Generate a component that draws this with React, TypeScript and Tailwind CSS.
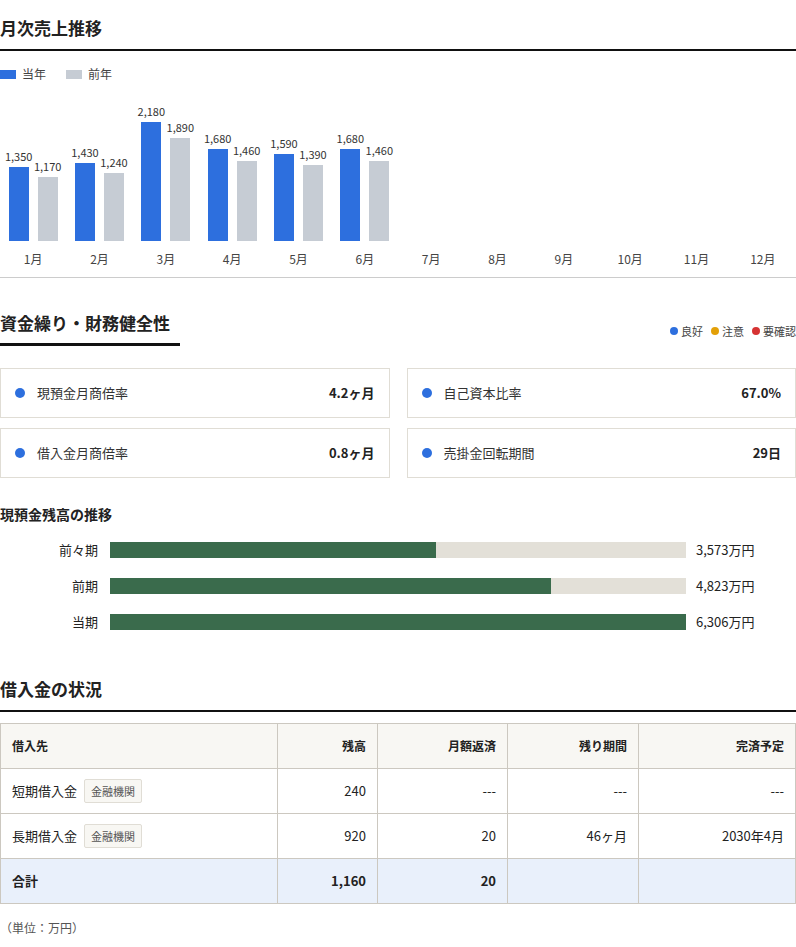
const months = [
  { m: '1月', cur: 1350, prev: 1170 },
  { m: '2月', cur: 1430, prev: 1240 },
  { m: '3月', cur: 2180, prev: 1890 },
  { m: '4月', cur: 1680, prev: 1460 },
  { m: '5月', cur: 1590, prev: 1390 },
  { m: '6月', cur: 1680, prev: 1460 },
  { m: '7月' }, { m: '8月' }, { m: '9月' }, { m: '10月' }, { m: '11月' }, { m: '12月' },
] as { m: string; cur?: number; prev?: number }[];

const fmt = (n: number) => n.toLocaleString('en-US');
const scale = 119 / 2180;

function Bar({ v, color }: { v: number; color: string }) {
  return (
    <div className="flex flex-col items-center w-[20px]">
      <span className="text-[11px] text-[#333] leading-none mb-[5px] whitespace-nowrap">{fmt(v)}</span>
      <div className={color} style={{ width: 20, height: v * scale }} />
    </div>
  );
}

const metrics = [
  ['現預金月商倍率', '4.2ヶ月'],
  ['自己資本比率', '67.0%'],
  ['借入金月商倍率', '0.8ヶ月'],
  ['売掛金回転期間', '29日'],
];

const cash = [
  ['前々期', 3573],
  ['前期', 4823],
  ['当期', 6306],
] as [string, number][];

export default function App() {
  return (
    <div className="w-[796px] bg-white text-[#222]" style={{ fontFamily: '"Noto Sans CJK JP", "Noto Sans", sans-serif' }}>
      <h2 className="text-[17px] font-bold pt-[16px] pb-[9px] border-b-2 border-[#111] leading-[24px]">月次売上推移</h2>
      <div className="flex items-center gap-[20px] mt-[14px] text-[12px] text-[#444]">
        <span className="flex items-center gap-[6px]"><span className="w-[16px] h-[9px] bg-[#2d6fde]" />当年</span>
        <span className="flex items-center gap-[6px]"><span className="w-[16px] h-[9px] bg-[#c6ccd4]" />前年</span>
      </div>
      <div className="grid grid-cols-12 h-[148px] mt-[10px]">
        {months.map((d) => (
          <div key={d.m} className="flex items-end justify-center gap-[9px]">
            {d.cur && <Bar v={d.cur} color="bg-[#2d6fde]" />}
            {d.prev && <Bar v={d.prev} color="bg-[#c6ccd4]" />}
          </div>
        ))}
      </div>
      <div className="grid grid-cols-12 border-b border-[#ccc] h-[37px] items-center text-[12px] text-[#444]">
        {months.map((d) => (
          <span key={d.m} className="text-center">{d.m}</span>
        ))}
      </div>

      <div className="flex items-end justify-between mt-[33px]">
        <h2 className="text-[17px] font-bold pb-[8px] border-b-[3px] border-[#111] w-[180px] leading-[24px]">資金繰り・財務健全性</h2>
        <div className="flex items-center gap-[8px] text-[11px] text-[#444] mb-[7px]">
          <span className="flex items-center gap-[3px]"><span className="w-[8px] h-[8px] rounded-full bg-[#2d6fde]" />良好</span>
          <span className="flex items-center gap-[3px]"><span className="w-[8px] h-[8px] rounded-full bg-[#e3a008]" />注意</span>
          <span className="flex items-center gap-[3px]"><span className="w-[8px] h-[8px] rounded-full bg-[#d63333]" />要確認</span>
        </div>
      </div>
      <div className="grid grid-cols-2 gap-x-[17px] gap-y-[10px] mt-[22px]">
        {metrics.map(([l, v]) => (
          <div key={l} className="h-[50px] border border-[#e0ddd5] flex items-center px-[14px] text-[13px]">
            <span className="w-[10px] h-[10px] rounded-full bg-[#2d6fde] mr-[12px]" />
            <span className="flex-1 text-[#333]">{l}</span>
            <span className="font-bold">{v}</span>
          </div>
        ))}
      </div>

      <h3 className="text-[14px] font-bold mt-[26px]">現預金残高の推移</h3>
      <div className="flex flex-col gap-[20px] mt-[17px]">
        {cash.map(([l, v]) => (
          <div key={l} className="flex items-center h-[16px] text-[13px]">
            <span className="w-[100px] text-right pr-[2px]">{l}</span>
            <div className="ml-[10px] w-[576px] h-[16px] bg-[#e3e0d8]">
              <div className="h-full bg-[#3a6b4c]" style={{ width: `${(v / 6306) * 100}%` }} />
            </div>
            <span className="ml-[10px]">{fmt(v)}万円</span>
          </div>
        ))}
      </div>

      <h2 className="text-[17px] font-bold mt-[47px] pb-[9px] border-b-2 border-[#111] leading-[24px]">借入金の状況</h2>
      <table className="w-full mt-[11px] border-collapse text-[13px]">
        <thead>
          <tr className="h-[45px] bg-[#f8f7f3] text-[12px] font-bold">
            <th className="border border-[#ccc8c0] text-left px-[11px] w-[277px]">借入先</th>
            <th className="border border-[#ccc8c0] text-right px-[11px] w-[100px]">残高</th>
            <th className="border border-[#ccc8c0] text-right px-[11px] w-[130px]">月額返済</th>
            <th className="border border-[#ccc8c0] text-right px-[11px] w-[131px]">残り期間</th>
            <th className="border border-[#ccc8c0] text-right px-[11px]">完済予定</th>
          </tr>
        </thead>
        <tbody>
          {[
            ['短期借入金', '240', '---', '---', '---'],
            ['長期借入金', '920', '20', '46ヶ月', '2030年4月'],
          ].map((r) => (
            <tr key={r[0]} className="h-[45px]">
              <td className="border border-[#ccc8c0] px-[11px]">
                <span className="flex items-center gap-[7px]">
                  {r[0]}
                  <span className="text-[11px] text-[#555] bg-[#f8f7f3] border border-[#e0ddd5] rounded-[2px] px-[6px] py-[3px]">金融機関</span>
                </span>
              </td>
              {r.slice(1).map((c, i) => (
                <td key={i} className="border border-[#ccc8c0] text-right px-[11px]">{c}</td>
              ))}
            </tr>
          ))}
          <tr className="h-[45px] bg-[#e9f0fb] font-bold">
            <td className="border border-[#ccc8c0] px-[11px]">合計</td>
            <td className="border border-[#ccc8c0] text-right px-[11px]">1,160</td>
            <td className="border border-[#ccc8c0] text-right px-[11px]">20</td>
            <td className="border border-[#ccc8c0]" />
            <td className="border border-[#ccc8c0]" />
          </tr>
        </tbody>
      </table>
      <p className="text-[12px] text-[#555] mt-[15px] pb-[6px]">（単位：万円）</p>
    </div>
  );
}
